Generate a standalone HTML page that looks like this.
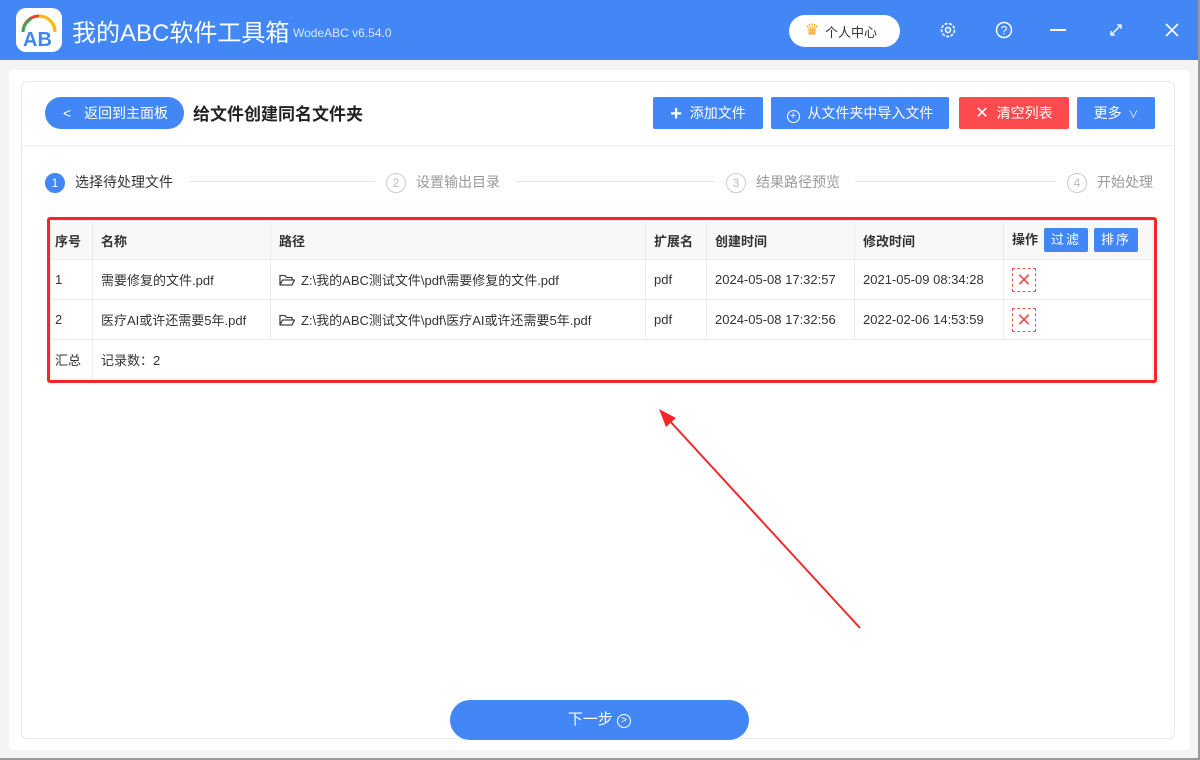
<!DOCTYPE html>
<html><head><meta charset="utf-8"><style>
*{box-sizing:border-box;margin:0;padding:0}
body{width:1200px;height:760px;overflow:hidden;background:#f4f4f4;font-family:"Liberation Sans","Noto Sans CJK SC",sans-serif;font-size:13px;color:#333;position:relative}
.abs{position:absolute}
.top{left:0;top:0;width:1200px;height:60px;background:#4287f5}
.logo{left:16px;top:8px;width:46px;height:44px;background:#fff;border-radius:10px}
.title{left:72px;top:13px;color:#fff;font-size:24px}
.ver{left:293px;top:26px;color:#dbe7fd;font-size:12px}
.pc{left:789px;top:15px;width:111px;height:32px;background:#fff;border-radius:16px;font-size:13px;color:#333;padding:7px 0 0 36px}
.panel{left:9px;top:70px;width:1181px;height:680px;background:#fff;border-radius:4px}
.card{left:21px;top:81px;width:1154px;height:658px;border:1px solid #e8e8e8;border-radius:6px;background:#fff}
.btn{top:97px;height:32px;color:#fff;font-size:14px;border-radius:2px;text-align:center;line-height:32px}
.step{top:172px;font-size:14px;color:#999}
.circ{width:20px;height:20px;border-radius:50%;border:1px solid #ccc;text-align:center;line-height:18px;font-size:12px;color:#bbb;display:inline-block;vertical-align:middle;margin-right:10px}
.line{top:181px;height:1px;background:#e4e4e4}
table{position:absolute;left:50px;top:220px;width:1103px;border-collapse:collapse;font-size:13px}
td{border:1px solid #ececec;padding:0 8px;height:40px;vertical-align:middle}
tr.h td{background:#f8f8f8;font-weight:bold;height:39px}
.x{display:inline-block;width:24px;height:24px;border:1px dashed #f05050;color:#f05050;text-align:center;line-height:22px;font-size:18px}
.sb{display:inline-block;background:#4287f5;color:#fff;font-weight:normal;padding:0 7px;height:24px;line-height:24px;border-radius:2px;margin-left:6px;letter-spacing:2px}
.fd{display:inline-block;vertical-align:-2px;margin-right:6px}
</style></head><body>
<div class="abs top"></div>
<div class="abs logo"><svg width="46" height="44" viewBox="0 0 46 44"><path d="M7 24 A16 16 0 0 1 39 24" stroke="#e94235" stroke-width="3" fill="none"/><path d="M23 8 A16 16 0 0 1 39 24" stroke="#fbbc05" stroke-width="3" fill="none"/><path d="M7 24 A16 16 0 0 1 15 11" stroke="#34a853" stroke-width="3" fill="none"/><text x="7" y="38" font-size="20" font-weight="bold" fill="#4285f4" font-family="Liberation Sans">AB</text></svg></div>
<div class="abs title">我的ABC软件工具箱</div>
<div class="abs ver">WodeABC v6.54.0</div>
<div class="abs pc"><span style="position:absolute;left:16px;top:5px;color:#f5a623;font-size:16px">♛</span>个人中心</div>
<svg class="abs" style="left:938px;top:20px" width="20" height="20" viewBox="0 0 20 20"><circle cx="10" cy="10" r="6.5" stroke="#fff" stroke-width="1.6" fill="none" stroke-dasharray="3 1.5"/><circle cx="10" cy="10" r="2.5" stroke="#fff" stroke-width="1.5" fill="none"/></svg>
<svg class="abs" style="left:994px;top:20px" width="20" height="20" viewBox="0 0 20 20"><circle cx="10" cy="10" r="7.5" stroke="#fff" stroke-width="1.5" fill="none"/><text x="10" y="14.5" text-anchor="middle" font-size="12" fill="#fff" font-family="Liberation Sans">?</text></svg>
<div class="abs" style="left:1050px;top:29px;width:16px;height:2px;background:#fff"></div>
<svg class="abs" style="left:1108px;top:22px" width="16" height="16" viewBox="0 0 16 16"><path d="M3 13L13 3M9 3h4v4M3 9v4h4" stroke="#fff" stroke-width="1.3" fill="none"/></svg>
<svg class="abs" style="left:1164px;top:22px" width="16" height="16" viewBox="0 0 16 16"><path d="M2 2L14 14M14 2L2 14" stroke="#fff" stroke-width="1.6"/></svg>
<div class="abs panel"></div>
<div class="abs card"></div>
<div class="abs" style="left:45px;top:97px;width:139px;height:32px;background:#4287f5;border-radius:16px;color:#fff;font-size:14px;line-height:32px;padding-left:39px">返回到主面板<span style="position:absolute;left:18px;top:0">&lt;</span></div>
<div class="abs" style="left:193px;top:100px;font-size:17px;font-weight:bold;color:#222">给文件创建同名文件夹</div>
<div class="abs btn" style="left:653px;width:110px;background:#4287f5"><b style="font-size:20px;vertical-align:-2px">+</b>&nbsp; 添加文件</div>
<div class="abs btn" style="left:771px;width:178px;background:#4287f5"><span style="display:inline-block;width:13px;height:13px;border:1.5px solid #fff;border-radius:50%;font-size:11px;line-height:10px;vertical-align:-1px">+</span>&nbsp; 从文件夹中导入文件</div>
<div class="abs btn" style="left:959px;width:110px;background:#fc4a4f"><span style="font-size:16px">✕</span>&nbsp; 清空列表</div>
<div class="abs btn" style="left:1077px;width:78px;background:#4287f5">更多 <span style="font-size:10px">&nbsp;∨</span></div>
<div class="abs" style="left:22px;top:145px;width:1152px;height:1px;background:#ececec"></div>
<div class="abs step" style="left:45px;color:#333"><span class="circ" style="background:#4287f5;border-color:#4287f5;color:#fff">1</span>选择待处理文件</div>
<div class="abs line" style="left:189px;width:186px"></div>
<div class="abs step" style="left:386px"><span class="circ">2</span>设置输出目录</div>
<div class="abs line" style="left:515px;width:200px"></div>
<div class="abs step" style="left:726px"><span class="circ">3</span>结果路径预览</div>
<div class="abs line" style="left:855px;width:201px"></div>
<div class="abs step" style="left:1067px"><span class="circ">4</span>开始处理</div>
<table>
<tr class="h"><td style="width:42px;padding:0 4px">序号</td><td style="width:178px">名称</td><td style="width:375px">路径</td><td style="width:61px">扩展名</td><td style="width:148px">创建时间</td><td style="width:149px">修改时间</td><td>操作<span class="sb">过滤</span><span class="sb">排序</span></td></tr>
<tr><td style="padding:0 4px">1</td><td>需要修复的文件.pdf</td><td><svg class="fd" width="16" height="13" viewBox="0 0 16 13"><path d="M1 11V1.5h5l1.5 2H13V6M1 11L3.5 6H15.5L13 11Z" stroke="#444" stroke-width="1.3" fill="none" stroke-linejoin="round"/></svg>Z:\我的ABC测试文件\pdf\需要修复的文件.pdf</td><td>pdf</td><td>2024-05-08 17:32:57</td><td>2021-05-09 08:34:28</td><td><span class="x">✕</span></td></tr>
<tr><td style="padding:0 4px">2</td><td>医疗AI或许还需要5年.pdf</td><td><svg class="fd" width="16" height="13" viewBox="0 0 16 13"><path d="M1 11V1.5h5l1.5 2H13V6M1 11L3.5 6H15.5L13 11Z" stroke="#444" stroke-width="1.3" fill="none" stroke-linejoin="round"/></svg>Z:\我的ABC测试文件\pdf\医疗AI或许还需要5年.pdf</td><td>pdf</td><td>2024-05-08 17:32:56</td><td>2022-02-06 14:53:59</td><td><span class="x">✕</span></td></tr>
<tr><td style="padding:0 4px;border-right:1px solid #ececec">汇总</td><td colspan="6" style="border-left:1px solid #ececec">记录数：2</td></tr>
</table>
<div class="abs" style="left:47px;top:217px;width:1110px;height:166px;border:3px solid #f5262a;border-radius:3px"></div>
<svg class="abs" style="left:0;top:0" width="1200" height="760"><line x1="860" y1="628" x2="668" y2="419" stroke="#f0282a" stroke-width="2"/><path d="M659 409 L676 418 L666 427 Z" fill="#f0282a"/></svg>
<div class="abs" style="left:450px;top:700px;width:299px;height:40px;background:#4287f5;border-radius:20px;color:#fff;font-size:15px;text-align:center;line-height:40px">下一步 <span style="display:inline-block;width:14px;height:14px;border:1px solid #fff;border-radius:50%;font-size:10px;line-height:12px;vertical-align:1px">&gt;</span></div>
<div class="abs" style="left:1198px;top:0;width:2px;height:760px;background:#9a9a9a"></div>
<div class="abs" style="left:0;top:758px;width:1200px;height:2px;background:#9a9a9a"></div>
</body></html>
